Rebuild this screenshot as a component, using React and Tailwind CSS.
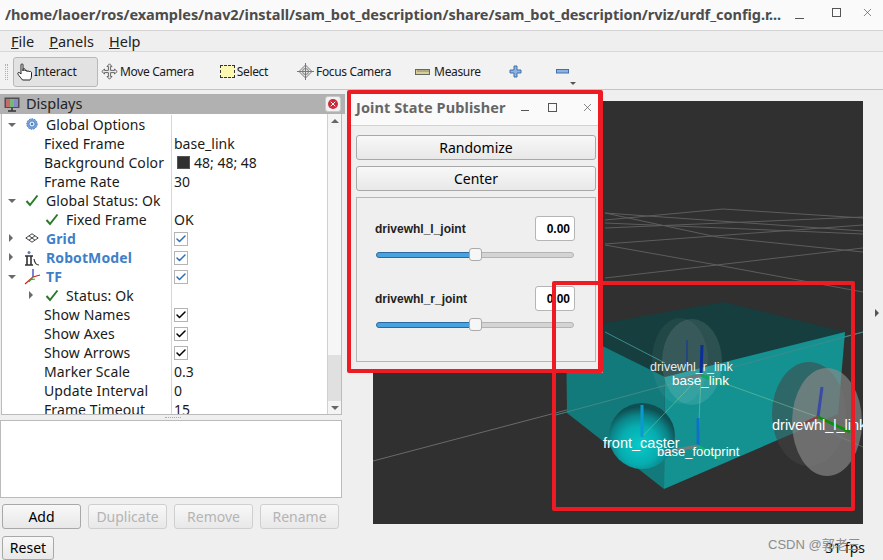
import { Check, X } from 'lucide-react';

const uiFont = "font-['Noto_Sans',sans-serif]";

const treeRows = [
  { label: 'Global Options', open: true, icon: 'gear', indent: 44 },
  { label: 'Fixed Frame', value: 'base_link', indent: 42 },
  { label: 'Background Color', value: '48; 48; 48', swatch: true, indent: 42 },
  { label: 'Frame Rate', value: '30', indent: 42 },
  { label: 'Global Status: Ok', open: true, icon: 'check', indent: 44 },
  { label: 'Fixed Frame', value: 'OK', icon: 'check2', indent: 64 },
  { label: 'Grid', closed: true, icon: 'grid', indent: 44, blue: true, box: 'blue' },
  { label: 'RobotModel', closed: true, icon: 'robot', indent: 44, blue: true, box: 'blue' },
  { label: 'TF', open: true, icon: 'tf', indent: 44, blue: true, box: 'blue' },
  { label: 'Status: Ok', closedInner: true, icon: 'check2', indent: 64 },
  { label: 'Show Names', box: 'black', indent: 42 },
  { label: 'Show Axes', box: 'black', indent: 42 },
  { label: 'Show Arrows', box: 'black', indent: 42 },
  { label: 'Marker Scale', value: '0.3', indent: 42 },
  { label: 'Update Interval', value: '0', indent: 42 },
  { label: 'Frame Timeout', value: '15', indent: 42 },
];

function TreeIcon({ type }) {
  if (type === 'gear') {
    return (
      <svg width="14" height="14" viewBox="0 0 14 14" className="absolute left-[23px] top-[2px]">
        <circle cx="7" cy="7" r="5.2" fill="#7da7dc" stroke="#3f74b8" strokeWidth="1" strokeDasharray="1.6 1" />
        <circle cx="7" cy="7" r="3.2" fill="#dbe7f7" stroke="#4a7fc2" strokeWidth="1" />
        <circle cx="7" cy="7" r="1.2" fill="#4a7fc2" />
      </svg>
    );
  }
  if (type === 'check' || type === 'check2') {
    return (
      <svg width="14" height="13" viewBox="0 0 14 13" className={`absolute top-[3px] ${type === 'check' ? 'left-[23px]' : 'left-[43px]'}`}>
        <path d="M1.5 7 L5 11 L12.5 1.5" fill="none" stroke="#2b7a2b" strokeWidth="2" />
      </svg>
    );
  }
  if (type === 'grid') {
    return (
      <svg width="14" height="10" viewBox="0 0 14 10" className="absolute left-[23px] top-[4px]">
        <path d="M7 .8 L13.2 5 L7 9.2 L.8 5 Z M4 2.8 L10 7.2 M10 2.8 L4 7.2" fill="none" stroke="#444" strokeWidth="1" />
      </svg>
    );
  }
  if (type === 'robot') {
    return (
      <svg width="16" height="17" viewBox="0 0 16 17" className="absolute left-[22px] top-[2px]">
        <circle cx="5" cy="2.5" r="1.5" fill="#5b7fb5" />
        <path d="M1 6 H9 M3 6 V15 M7 6 V15 M1 15 H9" fill="none" stroke="#333" strokeWidth="1.6" />
        <path d="M10 9 Q11 15 15 15" fill="none" stroke="#333" strokeWidth="1.2" />
      </svg>
    );
  }
  return (
    <svg width="17" height="17" viewBox="0 0 17 17" className="absolute left-[22px] top-[1px]">
      <path d="M9 9 L9 1" stroke="#2330c8" strokeWidth="1.2" />
      <path d="M9 9 L16 7" stroke="#d02020" strokeWidth="1.2" />
      <path d="M9 9 L1 16" stroke="#d02020" strokeWidth="1.2" />
      <path d="M9 9 L5 14" stroke="#22b022" strokeWidth="1.2" />
      <path d="M5 12 L11 11" stroke="#22b022" strokeWidth="1.2" />
    </svg>
  );
}

function CheckBox({ tone }) {
  return (
    <span className="flex w-[14px] h-[14px] items-center justify-center border border-[#b4b4b4] bg-white">
      <Check size={12} strokeWidth={3} className={tone === 'blue' ? 'text-[#2f6db5]' : 'text-black'} />
    </span>
  );
}

function TreeRow({ row }) {
  return (
    <div className="relative flex h-[19px] text-[14px] leading-[19px] text-[#1a1a1a]">
      {row.open && <span className="absolute left-[6px] top-[8px] w-0 h-0 border-x-[4px] border-x-transparent border-t-[4px] border-t-[#6a6a6a]" />}
      {row.closed && <span className="absolute left-[7px] top-[5px] w-0 h-0 border-y-[4px] border-y-transparent border-l-[4px] border-l-[#6a6a6a]" />}
      {row.closedInner && <span className="absolute left-[27px] top-[5px] w-0 h-0 border-y-[4px] border-y-transparent border-l-[4px] border-l-[#6a6a6a]" />}
      {row.icon && <TreeIcon type={row.icon} />}
      <div className="w-[170px] shrink-0 whitespace-nowrap border-r border-[#d6d6d6] tracking-[0.1px]" style={{ paddingLeft: row.indent }}>
        <span className={row.blue ? 'font-bold text-[#3f7fc8]' : ''}>{row.label}</span>
      </div>
      <div className="flex items-center pl-[2px] whitespace-nowrap">
        {row.swatch && <span className="mr-[4px] ml-[3px] w-[13px] h-[13px] border border-[#555] bg-[#303030]" />}
        {row.value}
        {row.box && <CheckBox tone={row.box} />}
      </div>
    </div>
  );
}

function PanelButton({ children, off, className = '' }) {
  return (
    <button className={`h-[25px] rounded-[3px] border text-[14px] bg-gradient-to-b from-[#f8f8f8] to-[#e8e8e8] ${off ? 'border-[#cfcfcf] text-[#b4b4b4]' : 'border-[#a8a8a8] text-black'} ${className}`}>
      {children}
    </button>
  );
}

function ToolItem({ icon, label, className = '' }) {
  return (
    <div className={`flex items-center gap-[2px] text-[12px] tracking-[-0.35px] text-[#1a1a1a] whitespace-nowrap ${className}`}>
      {icon}
      <span>{label}</span>
    </div>
  );
}

function MoveIcon() {
  return (
    <svg width="17" height="17" viewBox="0 0 17 17">
      <path d="M8.5 .8 L11 3.5 H9.6 V7.4 H13.5 V6 L16.2 8.5 L13.5 11 V9.6 H9.6 V13.5 H11 L8.5 16.2 L6 13.5 H7.4 V9.6 H3.5 V11 L.8 8.5 L3.5 6 V7.4 H7.4 V3.5 H6 Z" fill="#e8e8e8" stroke="#666" strokeWidth="1" />
    </svg>
  );
}

function FocusIcon() {
  return (
    <svg width="17" height="17" viewBox="0 0 17 17">
      <path d="M8.5 2 L15 8.5 L8.5 15 L2 8.5 Z" fill="#ececec" stroke="#777" strokeWidth="1" />
      <path d="M8.5 0 V17 M0 8.5 H17" stroke="#777" strokeWidth="1" />
      <circle cx="8.5" cy="8.5" r="3" fill="none" stroke="#777" strokeWidth="1" />
    </svg>
  );
}

function HandIcon() {
  return (
    <svg width="17" height="18" viewBox="0 0 17 18">
      <path d="M4 1.8 C4 .6 6 .6 6 1.8 V8 V6.4 C6 5.3 8 5.3 8 6.4 V8 C8 7 10 7 10 8 V8.6 C10 7.6 12 7.6 12 8.6 V9 C12 8.2 14.5 8.2 14.5 9.4 V13 C14.5 15 13.5 16.5 13 17 H5.5 C4.5 15.5 2 13 1 11.2 C.3 10 1.5 8.8 2.7 9.8 L4 11 Z" fill="#fff" stroke="#222" strokeWidth="1" />
    </svg>
  );
}

function Scene() {
  return (
    <svg viewBox="373 101 490 423" className="block w-[490px] h-[423px]">
      <defs>
        <radialGradient id="caster" cx="46%" cy="64%" r="58%">
          <stop offset="0%" stopColor="#05caca" />
          <stop offset="50%" stopColor="#07adb0" />
          <stop offset="78%" stopColor="#0b8488" />
          <stop offset="100%" stopColor="#0e4f52" />
        </radialGradient>
      </defs>
      <g stroke="#5d5d5d" strokeWidth="1" fill="none">
        <path d="M605 213 L863 231" />
        <path d="M605 220 L723 209 L863 218" />
        <path d="M605 228 L863 217" />
        <path d="M605 223 L863 234" />
        <path d="M605 244 L863 225" />
        <path d="M605 213 L717 237 L863 252" />
        <path d="M605 278 L863 248" />
        <path d="M605 245 L717 265 L863 292" />
        <path d="M605 332 L863 447" />
        <path d="M373 461 L863 332" stroke="#6a6a6a" />
      </g>
      <polygon points="566,330 723,302 845,332 665,377" fill="#163e3e" />
      <polygon points="566,328 665,377 664,489 567,413" fill="#127a7a" />
      <polygon points="665,377 845,332 838,414 664,489" fill="#149292" />
      <path d="M605 332 L665 363 M552 416 L863 332" stroke="#3f8a8a" strokeWidth="1" fill="none" />
      <ellipse cx="680" cy="361" rx="28" ry="43" fill="#ffffff" fillOpacity="0.05" />
      <ellipse cx="692" cy="362" rx="30" ry="43" fill="#ffffff" fillOpacity="0.1" />
      <ellipse cx="809" cy="414" rx="37" ry="52" fill="#444444" fillOpacity="0.55" />
      <ellipse cx="827" cy="422" rx="35" ry="54" fill="#8a8a8a" fillOpacity="0.66" />
      <circle cx="642" cy="436" r="33" fill="url(#caster)" />
      <g fill="none" strokeLinecap="butt">
        <path d="M701 375 L698 446 M701 375 L642 437 M701 375 L818 417" stroke="#8fd8a0" strokeWidth="1" opacity="0.45" />
        <path d="M687 340 L687 365" stroke="#26457f" strokeWidth="2" />
        <path d="M701 375 L702 345" stroke="#0b2d96" strokeWidth="3" />
        <path d="M701 375 L725 385" stroke="#11a860" strokeWidth="3" />
        <path d="M701 375 L678 380" stroke="#6d7a7a" strokeWidth="3" />
        <path d="M818 417 L822 387" stroke="#3a4aa6" strokeWidth="3" />
        <path d="M818 417 L850 432" stroke="#0b8f0b" strokeWidth="3" />
        <path d="M818 417 L797 427" stroke="#8e4040" strokeWidth="3" />
        <path d="M642 437 L642 405" stroke="#0a9ad0" strokeWidth="3" />
        <path d="M698 446 L698 418" stroke="#0f70c8" strokeWidth="3" />
        <path d="M698 446 L720 459" stroke="#10b070" strokeWidth="3" />
        <path d="M698 446 L660 453" stroke="#6f7f7f" strokeWidth="3" />
      </g>
      <g fill="#ffffff" fontFamily="'Liberation Sans', sans-serif">
        <text x="650" y="371" fontSize="12.5" fillOpacity="0.9">drivewhl_r_link</text>
        <text x="672" y="385" fontSize="13.5">base_link</text>
        <text x="603" y="448" fontSize="14.5">front_caster</text>
        <text x="657" y="456" fontSize="13">base_footprint</text>
        <text x="772" y="430" fontSize="14.5">drivewhl_l_link</text>
      </g>
    </svg>
  );
}

function JointControl({ name }) {
  return (
    <div className="h-[70px]">
      <div className="flex items-center justify-between h-[25px] pl-[18px] pr-[20px]">
        <span className="font-['Liberation_Sans',sans-serif] font-bold text-[12px] text-[#222]">{name}</span>
        <span className="flex items-center justify-end w-[40px] h-[25px] pr-[4px] rounded-[3px] border border-[#b5b5b5] bg-white font-['Liberation_Sans',sans-serif] font-bold text-[12px]">0.00</span>
      </div>
      <div className="relative ml-[19px] mr-[21px] mt-[7px] flex h-[13px] items-center">
        <div className="w-[96px] h-[6px] rounded-l-full border border-[#2a6a9c] bg-[#47a3e0]" />
        <div className="flex-1 h-[6px] rounded-r-full border border-[#b4b4b4] bg-[#d4d4d4]" />
        <span className="absolute left-[93px] top-0 w-[13px] h-[13px] rounded-[3px] border border-[#aaaaaa] bg-[#f6f6f6]" />
      </div>
    </div>
  );
}

function JointWindow() {
  return (
    <div className="absolute left-[348px] top-[89px] w-[255px] h-[284px] rounded-t-[8px] border border-[#c0c0c0] bg-[#efefef]">
      <div className="flex h-[36px] items-center justify-between rounded-t-[8px] border-b border-[#d2d2d2] bg-[#fafafa] pl-[7px] pr-[8px]">
        <span className="text-[14.5px] font-bold tracking-[0.1px] text-[#666666] whitespace-nowrap">Joint State Publisher</span>
        <div className="flex items-center">
          <span className="mr-[19px] mt-[6px] w-[8px] h-[1px] bg-[#555]" />
          <span className="mr-[24px] -mt-[1px] w-[9px] h-[9px] border border-[#555]" />
          <X size={13} strokeWidth={1.3} className="-mt-[1px] text-[#555]" />
        </div>
      </div>
      <div className="flex flex-col gap-[6px] px-[7px] pt-[9px]">
        <PanelButton className="w-[240px]">Randomize</PanelButton>
        <PanelButton className="w-[240px]">Center</PanelButton>
        <div className="w-[240px] h-[165px] border border-[#b5b5b5] pt-[18px]">
          <JointControl name="drivewhl_l_joint" />
          <JointControl name="drivewhl_r_joint" />
        </div>
      </div>
    </div>
  );
}

export default function App() {
  return (
    <div className={`relative flex flex-col w-[883px] h-[560px] overflow-hidden bg-[#efefef] ${uiFont}`}>
      {/* window title */}
      <div className="flex h-[31px] shrink-0 items-center border-b border-[#d4d4d4] bg-[#fafafa] pl-[5px] pr-[9px]">
        <span className="w-[792px] whitespace-nowrap text-[14.5px] font-bold tracking-[-0.04px] text-[#4c4c4c]">/home/laoer/ros/examples/nav2/install/sam_bot_description/share/sam_bot_description/rviz/urdf_config.r...</span>
        <span className="mt-[6px] w-[9px] h-[1px] bg-[#555]" />
        <span className="ml-[28px] -mt-[6px] w-[9px] h-[9px] border border-[#555]" />
        <X size={13} strokeWidth={1.3} className="ml-[20px] -mt-[6px] text-[#555]" />
      </div>

      {/* menu */}
      <div className="flex h-[21px] shrink-0 items-center gap-[15px] border-b border-[#d8d8d8] pl-[11px] pt-[1px] text-[14.5px] text-[#222]">
        <span><span className="underline">F</span>ile</span>
        <span><span className="underline">P</span>anels</span>
        <span><span className="underline">H</span>elp</span>
      </div>

      {/* toolbar */}
      <div className="relative flex h-[38px] shrink-0 items-center border-b border-[#c4c4c4] bg-[#f2f2f2] pl-[5px] pt-[2px]">
        <span className="h-[16px] w-[3px] border-x border-dotted border-[#b0b0b0]" />
        <div className="ml-[5px] flex h-[30px] w-[85px] items-center rounded-[3px] border border-[#b8b8b8] bg-[#e2e2e2] pl-[3px] text-[12px] tracking-[-0.2px] text-[#1a1a1a]">
          <HandIcon />
          <span>Interact</span>
        </div>
        <ToolItem icon={<MoveIcon />} label="Move Camera" className="ml-[3px]" />
        <ToolItem
          icon={<span className="h-[13px] w-[15px] border border-dashed border-[#333] bg-[#fdf7b0]" />}
          label="Select"
          className="ml-[26px]"
        />
        <ToolItem icon={<FocusIcon />} label="Focus Camera" className="ml-[29px]" />
        <ToolItem
          icon={
            <svg width="15" height="6" viewBox="0 0 15 6" className="mr-[2px]">
              <rect x=".5" y=".5" width="14" height="5" fill="#d8cf94" stroke="#666" />
              <path d="M3 1 V3 M5 1 V3 M7 1 V3 M9 1 V3 M11 1 V3 M13 1 V3" stroke="#666" strokeWidth="0.7" />
            </svg>
          }
          label="Measure"
          className="ml-[24px]"
        />
        <svg width="13" height="13" viewBox="0 0 13 13" className="ml-[28px]">
          <path d="M5 1 H8 V5 H12 V8 H8 V12 H5 V8 H1 V5 H5 Z" fill="#8fb3e0" stroke="#3f70b0" />
        </svg>
        <svg width="13" height="5" viewBox="0 0 13 5" className="ml-[34px]">
          <rect x=".5" y=".5" width="12" height="3.5" fill="#8fb3e0" stroke="#3f70b0" />
        </svg>
        <span className="absolute left-[570px] top-[30px] w-0 h-0 border-x-[3px] border-x-transparent border-t-[3px] border-t-[#555]" />
      </div>

      {/* main area */}
      <div className="flex flex-1 min-h-0">
        <div className="w-[345px] shrink-0 pt-[4px]">
          <div className="flex h-[20px] items-center bg-[#b1b1b1] pl-[4px] pr-[4px] text-[14.5px] text-[#222]">
            <svg width="16" height="15" viewBox="0 0 16 15" className="mr-[6px]">
              <rect x=".5" y=".5" width="15" height="10.5" fill="#4f4f4f" />
              <rect x="2" y="2" width="4" height="8" fill="#c46a6a" />
              <rect x="6" y="2" width="4" height="8" fill="#77b877" />
              <rect x="10" y="2" width="4" height="8" fill="#8a8ac8" />
              <path d="M8 11 V13.5 M4 14 H12" stroke="#333" strokeWidth="1.5" />
            </svg>
            <span className="flex-1">Displays</span>
            <span className="flex h-[16px] w-[16px] items-center justify-center rounded-[3px] border border-[#c8c8c8] bg-[#f2f2f2]">
              <span className="flex h-[10px] w-[10px] items-center justify-center rounded-full bg-[#cc2b3a]">
                <X size={8} strokeWidth={3} className="text-white" />
              </span>
            </span>
          </div>
          <div className="relative ml-[1px] h-[301px] w-[341px] overflow-hidden border-x border-b border-[#bbbbbb] bg-white pt-[1px]">
            {treeRows.map((row, i) => (
              <TreeRow key={i} row={row} />
            ))}
            <div className="absolute right-0 top-0 flex h-full w-[14px] flex-col border-l border-[#d0d0d0] bg-[#f4f4f4]">
              <div className="flex h-[14px] items-center justify-center">
                <span className="h-0 w-0 border-x-[4px] border-x-transparent border-b-[4px] border-b-[#666]" />
              </div>
              <div className="h-[227px] bg-[#f6f6f6]" />
              <div className="flex-1 bg-[#e0e0e0]" />
              <div className="flex h-[13px] items-center justify-center">
                <span className="h-0 w-0 border-x-[4px] border-x-transparent border-t-[4px] border-t-[#666]" />
              </div>
            </div>
          </div>
          <div className="flex h-[5px] items-center justify-center">
            <span className="w-[16px] border-t border-dotted border-[#aaaaaa]" />
          </div>
          <div className="h-[78px] w-[342px] border border-[#bbbbbb] bg-white" />
          <div className="flex gap-[7px] pl-[2px] pt-[6px]">
            <PanelButton className="w-[79px]">Add</PanelButton>
            <PanelButton off className="w-[79px]">Duplicate</PanelButton>
            <PanelButton off className="w-[79px]">Remove</PanelButton>
            <PanelButton off className="w-[79px]">Rename</PanelButton>
          </div>
        </div>
        <div className="ml-[28px] mt-[11px] h-[423px] w-[490px] shrink-0 overflow-hidden bg-[#303030]">
          <Scene />
        </div>
        <div className="relative flex-1">
          <span className="absolute left-[12px] top-[219px] h-0 w-0 border-y-[4px] border-y-transparent border-l-[4px] border-l-[#555]" />
        </div>
      </div>

      {/* status */}
      <div className="flex h-[30px] shrink-0 items-center justify-between pl-[2px] pr-[18px]">
        <PanelButton className="w-[52px] !h-[24px] mt-[5px]">Reset</PanelButton>
        <span className="mt-[5px] text-[14px] text-[#111]">31 fps</span>
      </div>

      <JointWindow />

      {/* red annotation frames */}
      <div className="absolute left-[347px] top-[90px] h-[283px] w-[256px] rounded-[2px] border-[4px] border-r-[5px] border-[#ed1c24]" />
      <div className="absolute left-[552px] top-[281px] h-[230px] w-[303px] rounded-[2px] border-[4px] border-[#ed1c24]" />

      <span className="absolute left-[768px] top-[535px] font-['Liberation_Sans','Noto_Sans_CJK_SC',sans-serif] text-[13px] text-[#8c8c8c] whitespace-nowrap">CSDN @郭老三</span>
    </div>
  );
}
